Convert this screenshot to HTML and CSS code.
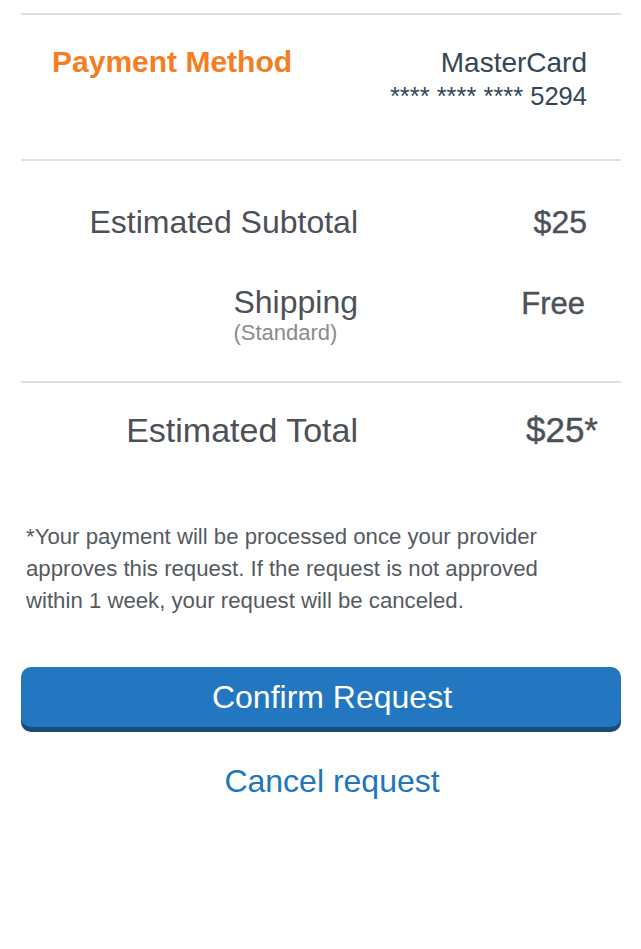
FILE: index.html
```html
<!DOCTYPE html>
<html lang="en">
<head>
<meta charset="utf-8">
<title>Confirm Request</title>
<link rel="stylesheet" href="styles.css">
</head>
<body>
<main class="page">
  <section class="payment">
    <h2 class="payment-label">Payment Method</h2>
    <div class="card">
      <div class="card-brand">MasterCard</div>
      <div class="card-number">**** **** **** 5294</div>
    </div>
  </section>

  <section class="summary">
    <div class="row row-subtotal">
      <div class="label">Estimated Subtotal</div>
      <div class="value">$25</div>
    </div>
    <div class="row row-shipping">
      <div class="label">
        <div class="label-stack">
          <div>Shipping</div>
          <div class="sub">(Standard)</div>
        </div>
      </div>
      <div class="value value-free">Free</div>
    </div>
  </section>

  <section class="total">
    <div class="row row-total">
      <div class="label">Estimated Total</div>
      <div class="value value-total">$25*</div>
    </div>
  </section>

  <p class="note">*Your payment will be processed once your provider approves this request. If the request is not approved within 1 week, your request will be canceled.</p>

  <button class="btn-confirm" type="button">Confirm Request</button>
  <a class="link-cancel" href="#">Cancel request</a>
</main>
</body>
</html>
```

FILE: styles.css
```css
* { box-sizing: border-box; }

html, body {
  margin: 0;
  padding: 0;
  background: #ffffff;
}

body {
  font-family: "Liberation Sans", Arial, Helvetica, sans-serif;
  color: #4c5057;
}

.page {
  padding: 13px 20px 0 21px;
  display: flex;
  flex-direction: column;
}

.payment {
  border-top: 2px solid #dededb;
  border-bottom: 2px solid #dededb;
  display: flex;
  justify-content: space-between;
  align-items: baseline;
  padding: 29px 34px 46px 31px;
}

.payment-label {
  margin: 0;
  font-size: 30px;
  line-height: 36px;
  font-weight: bold;
  color: #f47e21;
}

.card {
  text-align: right;
  color: #344656;
}

.card-brand {
  font-size: 28px;
  line-height: 32px;
}

.card-number {
  font-size: 25.5px;
  line-height: 34px;
}

.summary {
  border-bottom: 2px solid #dededb;
  padding: 43px 34px 34px 0;
  display: flex;
  flex-direction: column;
  gap: 44px;
}

.row {
  display: grid;
  grid-template-columns: 1fr 229px;
  align-items: start;
}

.label {
  font-size: 32px;
  line-height: 36px;
  text-align: right;
}

.label-stack {
  display: inline-block;
  text-align: left;
}

.sub {
  font-size: 22px;
  line-height: 25px;
  color: #8b8b8b;
}

.value {
  font-size: 32px;
  line-height: 36px;
  text-align: right;
  -webkit-text-stroke: 0.4px #4c5057;
}

.value-free {
  font-size: 31px;
  padding-top: 2px;
  padding-right: 2px;
}

.total {
  padding: 27px 34px 0 0;
}

.row-total .label {
  font-size: 34px;
  line-height: 40px;
}

.value-total {
  font-size: 35px;
  line-height: 40px;
  margin-right: -11px;
}

.note {
  margin: 71px 60px 0 5px;
  font-size: 22.2px;
  line-height: 32px;
  color: #555a5f;
}

.btn-confirm {
  margin: 50px 0 0 0;
  height: 60px;
  border: none;
  border-radius: 10px;
  background: #2277c0;
  box-shadow: 0 5px 0 #1a4b79;
  color: #ffffff;
  font-family: "Liberation Sans", Arial, Helvetica, sans-serif;
  font-size: 32px;
  line-height: 60px;
  padding: 0 0 0 22px;
  cursor: pointer;
}

.link-cancel {
  margin: 34px 0 0 22px;
  align-self: center;
  font-size: 32px;
  line-height: 40px;
  color: #2075bb;
  text-decoration: none;
}
```
